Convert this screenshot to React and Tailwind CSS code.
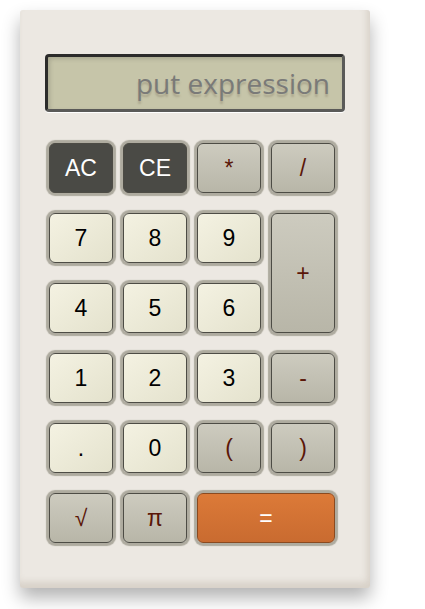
import React from "react";

const base =
  "flex items-center justify-center rounded-[6px] border border-[#4d4c45] shadow-[0_0_1px_3px_#aeab9f] text-[23px] leading-none";
const num = base + " bg-gradient-to-br from-[#f4f2e2] to-[#e4e2cd] text-black";
const op = base + " bg-gradient-to-b from-[#cdcbbf] to-[#b8b6a8] text-[#5a1608]";
const dark = base + " bg-[#4a4a45] text-white border-[#2e2e2a]";
const eq = base + " bg-gradient-to-b from-[#dc7a38] to-[#c96b30] text-white border-[#8a4a20]";

export default function App() {
  return (
    <div className="w-[425px] h-[609px] bg-white relative" style={{ fontFamily: '"Liberation Sans", Arial, sans-serif' }}>
      <div className="absolute left-[20px] top-[10px] w-[350px] h-[578px] rounded-[3px] bg-[#ece8e2] shadow-[0_10px_18px_rgba(0,0,0,0.3),inset_-3px_-6px_6px_rgba(180,170,155,0.35)] flex flex-col">
        <div className="mt-[44px] ml-[25px] w-[300px] h-[58px] rounded-[4px] border-[3px] border-t-[#2b2b2a] border-l-[#2b2b2a] border-r-[#5a5a58] border-b-[#5a5a58] bg-[#c6c5a9] shadow-[0_1px_0_#ffffff,inset_2px_2px_4px_rgba(0,0,0,0.15)] flex items-center justify-end pr-[12px]">
          <span
            className="text-[28px] leading-none text-[#7a7a78] [text-shadow:0_3px_2px_rgba(120,110,90,0.35)]"
            style={{ fontFamily: '"Open Sans", "Noto Sans", sans-serif' }}
          >
            put expression
          </span>
        </div>
        <div className="mt-[31px] ml-[29px] grid grid-cols-[64px_64px_64px_64px] grid-rows-[50px_50px_50px_50px_50px_50px] gap-x-[10px] gap-y-[20px]">
          <div className={dark}>AC</div>
          <div className={dark}>CE</div>
          <div className={op}>*</div>
          <div className={op}>/</div>
          <div className={num}>7</div>
          <div className={num}>8</div>
          <div className={num}>9</div>
          <div className={op + " row-span-2"}>+</div>
          <div className={num}>4</div>
          <div className={num}>5</div>
          <div className={num}>6</div>
          <div className={num}>1</div>
          <div className={num}>2</div>
          <div className={num}>3</div>
          <div className={op}>-</div>
          <div className={num}>.</div>
          <div className={num}>0</div>
          <div className={op}>(</div>
          <div className={op}>)</div>
          <div className={op}>√</div>
          <div className={op}>π</div>
          <div className={eq + " col-span-2"}>=</div>
        </div>
      </div>
    </div>
  );
}
